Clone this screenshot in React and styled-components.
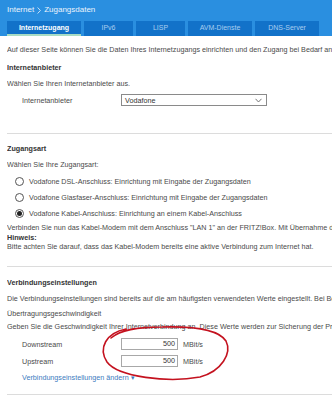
import React from 'react';
import styled, { createGlobalStyle } from 'styled-components';

const GlobalStyle = createGlobalStyle`
  body {
    margin: 0;
    background: #ffffff;
    font-family: 'Liberation Sans', Arial, sans-serif;
    overflow: hidden;
  }
`;

const Page = styled.div`
  position: relative;
  width: 332px;
  height: 400px;
  overflow: hidden;
  white-space: nowrap;
`;

const Header = styled.div`
  background: #2a8fe0;
  padding: 5px 7px 0;
`;

const Title = styled.div`
  display: flex;
  align-items: center;
  column-gap: 3px;
  color: #eaf3fc;
  font-size: 8px;
  line-height: 10px;
`;

const Tabs = styled.div`
  display: flex;
  column-gap: 3px;
  margin-top: 6px;
`;

const Tab = styled.div`
  box-sizing: border-box;
  width: ${(p) => p.$w}px;
  height: 15px;
  display: flex;
  align-items: center;
  justify-content: center;
  background: #1272c9;
  color: ${(p) => (p.$active ? '#ffffff' : '#a9cdef')};
  font-size: 7px;
  font-weight: ${(p) => (p.$active ? 'bold' : 'normal')};
  border-bottom: 2px solid ${(p) => (p.$active ? '#a8dcc4' : '#1272c9')};
`;

const Content = styled.div`
  padding: 6px 0 0 7px;
  color: #4a4a4a;
  font-size: 7.2px;
`;

const Line = styled.div`
  line-height: ${(p) => p.$lh || 16}px;
  margin-top: ${(p) => p.$mt || 0}px;
  overflow: hidden;
`;

const Heading = styled(Line)`
  color: #333;
  font-weight: bold;
`;

const Rule = styled.div`
  height: 1px;
  background: #dcdcdc;
  margin-top: ${(p) => p.$mt}px;
`;

const FieldRow = styled.div`
  display: flex;
  align-items: center;
  height: ${(p) => p.$h || 17}px;
  padding-left: 15px;
  margin-top: ${(p) => p.$mt || 0}px;
`;

const Label = styled.div`
  width: 99px;
`;

const Select = styled.div`
  box-sizing: border-box;
  width: 146px;
  height: 12px;
  border: 1px solid #8a8a8a;
  display: flex;
  align-items: center;
  justify-content: space-between;
  padding: 0 4px 0 3px;
  color: #333;
`;

const Input = styled.div`
  box-sizing: border-box;
  width: 57px;
  height: 12px;
  border: 1px solid #a8a8a8;
  text-align: right;
  padding-right: 2px;
  line-height: 10px;
  color: #333;
`;

const Unit = styled.span`
  margin-left: 5px;
`;

const RadioRow = styled.div`
  display: flex;
  align-items: center;
  column-gap: 5px;
  height: 16px;
  padding-left: 8px;
`;

const Circle = styled.span`
  box-sizing: border-box;
  width: 9px;
  height: 9px;
  border-radius: 50%;
  border: 1px solid #555;
  display: flex;
  align-items: center;
  justify-content: center;
  &::after {
    content: '';
    width: 5px;
    height: 5px;
    border-radius: 50%;
    background: ${(p) => (p.$checked ? '#222' : 'transparent')};
  }
`;

const Link = styled(Line)`
  color: #3d7cc0;
  padding-left: 15px;
`;

const Scribble = styled.svg`
  position: absolute;
  left: 0;
  top: 0;
  pointer-events: none;
`;

const tabs = [
  { name: 'Internetzugang', w: 74, active: true },
  { name: 'IPv6', w: 49 },
  { name: 'LISP', w: 49 },
  { name: 'AVM-Dienste', w: 64 },
  { name: 'DNS-Server', w: 64 },
];

const radios = [
  { text: 'Vodafone DSL-Anschluss: Einrichtung mit Eingabe der Zugangsdaten' },
  { text: 'Vodafone Glasfaser-Anschluss: Einrichtung mit Eingabe der Zugangsdaten' },
  { text: 'Vodafone Kabel-Anschluss: Einrichtung an einem Kabel-Anschluss', checked: true },
];

const App = () => {
  return (
    <Page>
      <GlobalStyle />
      <Header>
        <Title>
          <span>Internet</span>
          <svg width='4' height='7' viewBox='0 0 4 7'>
            <path d='M0.6 0.5 L3.4 3.5 L0.6 6.5' fill='none' stroke='#eaf3fc' strokeWidth='0.8' />
          </svg>
          <span>Zugangsdaten</span>
        </Title>
        <Tabs>
          {tabs.map((t) => (
            <Tab key={t.name} $w={t.w} $active={t.active}>
              {t.name}
            </Tab>
          ))}
        </Tabs>
      </Header>
      <Content>
        <Line>
          Auf dieser Seite können Sie die Daten Ihres Internetzugangs einrichten und den Zugang bei Bedarf anpassen.
        </Line>
        <Heading $mt={2}>Internetanbieter</Heading>
        <Line>Wählen Sie Ihren Internetanbieter aus.</Line>
        <FieldRow $h={16}>
          <Label>Internetanbieter</Label>
          <Select>
            <span>Vodafone</span>
            <svg width='7' height='5' viewBox='0 0 7 5'>
              <path d='M0.5 0.8 L3.5 4 L6.5 0.8' fill='none' stroke='#666' strokeWidth='0.9' />
            </svg>
          </Select>
        </FieldRow>
        <Rule $mt={25} />
        <Heading $mt={7}>Zugangsart</Heading>
        <Line>Wählen Sie Ihre Zugangsart:</Line>
        {radios.map((r) => (
          <RadioRow key={r.text}>
            <Circle $checked={r.checked} />
            {r.text}
          </RadioRow>
        ))}
        <Line $lh={9.5} $mt={2}>
          Verbinden Sie nun das Kabel-Modem mit dem Anschluss "LAN 1" an der FRITZ!Box. Mit Übernahme der Einstellungen
        </Line>
        <Heading $lh={9.5}>Hinweis:</Heading>
        <Line $lh={9.5}>
          Bitte achten Sie darauf, dass das Kabel-Modem bereits eine aktive Verbindung zum Internet hat.
        </Line>
        <Rule $mt={14} />
        <Heading $mt={8}>Verbindungseinstellungen</Heading>
        <Line>
          Die Verbindungseinstellungen sind bereits auf die am häufigsten verwendeten Werte eingestellt. Bei Bedarf
        </Line>
        <Line $lh={14}>Übertragungsgeschwindigkeit</Line>
        <Line $lh={12}>
          Geben Sie die Geschwindigkeit Ihrer Internetverbindung an. Diese Werte werden zur Sicherung der Priorisierung
        </Line>
        <FieldRow $mt={3}>
          <Label>Downstream</Label>
          <Input>500</Input>
          <Unit>MBit/s</Unit>
        </FieldRow>
        <FieldRow>
          <Label>Upstream</Label>
          <Input>500</Input>
          <Unit>MBit/s</Unit>
        </FieldRow>
        <Link>Verbindungseinstellungen ändern ▾</Link>
        <Rule $mt={8} />
      </Content>
      <Scribble width='332' height='400' viewBox='0 0 332 400'>
        <path
          d='M126 329 C106 333, 98 348, 107 362 C118 377, 168 383, 200 377 C222 371, 232 353, 226 341 C219 330, 196 326, 162 327 C140 327, 122 329, 111 338'
          fill='none'
          stroke='#c4121f'
          strokeWidth='1.6'
          strokeLinecap='round'
        />
      </Scribble>
    </Page>
  );
};

export default App;
